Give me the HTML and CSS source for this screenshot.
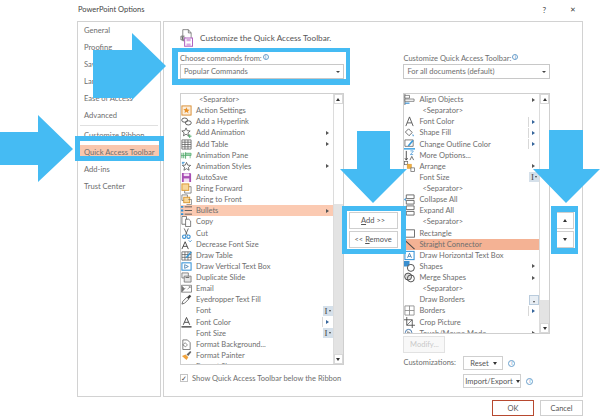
FILE: index.html
```html
<!DOCTYPE html>
<html lang="en">
<head>
<meta charset="utf-8">
<title>PowerPoint Options</title>
<link rel="stylesheet" href="styles.css">
</head>
<body>
<svg class="sprite" width="0" height="0" aria-hidden="true">
  <symbol id="i-action" viewBox="0 0 12 12"><rect x="1" y="1" width="10" height="10" fill="#fbeedd" stroke="#d98a2b"/><path d="M6 2.500l1 2.400 2.500.2-1.900 1.600.6 2.500L6 7.400 3.800 8.700l.6-2.500-1.900-1.600 2.500-.2z" fill="#e8912a"/></symbol>
  <symbol id="i-link" viewBox="0 0 12 12"><ellipse cx="4" cy="4.500" rx="3.200" ry="2.300" fill="none" stroke="#555"/><ellipse cx="8" cy="7.500" rx="3.200" ry="2.300" fill="none" stroke="#555"/></symbol>
  <symbol id="i-star" viewBox="0 0 12 12"><path d="M5.500 1l1.300 3 3.200.3-2.400 2.100.7 3.200-2.800-1.700-2.800 1.700.7-3.200L.9 4.300l3.300-.3z" fill="#fff" stroke="#444" stroke-width=".8"/><path d="M9.500 8v4M7.500 10h4" stroke="#4aa564"/></symbol>
  <symbol id="i-table" viewBox="0 0 12 12"><path d="M1 1h10v10H1zM1 3.500h10M1 6h10M1 8.500h10M4.300 1v10M7.600 1v10" fill="#fff" stroke="#555" stroke-width=".8"/></symbol>
  <symbol id="i-pane" viewBox="0 0 12 12"><path d="M1 3v6M3 3v6M5 2.500v7" stroke="#4aa564"/><path d="M5 3.500h6v2.500H5z" fill="#9bd3ad" stroke="#4aa564" stroke-width=".7"/><path d="M10 6v3M0 6h5" stroke="#4aa564" stroke-width=".7"/></symbol>
  <symbol id="i-anim" viewBox="0 0 12 12"><path d="M6 1.500l1.300 3 3.200.3-2.400 2.100.7 3.200L6 8.400l-2.800 1.700.7-3.200-2.400-2.100 3.200-.3z" fill="#fff" stroke="#444" stroke-width=".8"/><path d="M1 1.500h3M1 3h2" stroke="#3a8fd0"/></symbol>
  <symbol id="i-save" viewBox="0 0 12 12"><path d="M1 1h9l1 1v9H1z" fill="#a84fb4"/><path d="M3 1.500h6v3H3z" fill="#f3e0f5"/><path d="M3 7h6v4H3z" fill="#f3e0f5"/></symbol>
  <symbol id="i-forward" viewBox="0 0 12 12"><path d="M8 4h3v7H4V8" fill="none" stroke="#666" stroke-width=".8"/><rect x="1" y="1" width="7.500" height="7" fill="#f7d79a" stroke="#d9952c"/></symbol>
  <symbol id="i-front" viewBox="0 0 12 12"><path d="M1 1h6v6H1z" fill="none" stroke="#666" stroke-width=".8"/><rect x="3" y="3.500" width="6.500" height="6" fill="#f7d79a" stroke="#d9952c"/><path d="M8 6h3.500v5.500H6" fill="none" stroke="#666" stroke-width=".7"/></symbol>
  <symbol id="i-bullets" viewBox="0 0 12 12"><path d="M4 2h8M4 6h8M4 10h8" stroke="#555"/><path d="M0 1h2.500v2H0zM0 5h2.500v2H0zM0 9h2.500v2H0z" fill="#2f8fd6"/></symbol>
  <symbol id="i-copy" viewBox="0 0 12 12"><path d="M1 .5h5v8.500H1z" fill="#fff" stroke="#555" stroke-width=".8"/><path d="M5 3.500h3.500l2 2v6H5z" fill="#fff" stroke="#555" stroke-width=".8"/></symbol>
  <symbol id="i-cut" viewBox="0 0 12 12"><path d="M3.500.5l3.300 7M8 .5L5 7.500" stroke="#555" stroke-width=".9"/><circle cx="3.500" cy="9.500" r="1.800" fill="none" stroke="#3a8fd0" stroke-width="1.200"/><circle cx="8.200" cy="9.500" r="1.800" fill="none" stroke="#3a8fd0" stroke-width="1.200"/></symbol>
  <symbol id="i-decrease" viewBox="0 0 12 12"><path d="M1 11L4.500 3 8 11M2.300 8h4.400" fill="none" stroke="#444"/><path d="M8.500 1.500l1.500 1.500 1.500-1.500" fill="none" stroke="#3a8fd0"/></symbol>
  <symbol id="i-drawtable" viewBox="0 0 12 12"><path d="M1 2h10v9H1zM1 5h10M1 8h10M4.300 2v9M7.600 2v9" fill="#fff" stroke="#555" stroke-width=".8"/><path d="M5 8l5.500-6.500 1.300 1L6.300 9z" fill="#3a9ad9"/></symbol>
  <symbol id="i-vtext" viewBox="0 0 12 12"><rect x="1" y="2" width="10" height="8" fill="#fff" stroke="#2f8fd6" stroke-width="1.100"/><path d="M4 4l4 2-4 2z" fill="none" stroke="#2f6fa6" stroke-width=".8"/></symbol>
  <symbol id="i-dup" viewBox="0 0 12 12"><path d="M1 1h7v5.500H1z" fill="#eee" stroke="#666" stroke-width=".8"/><path d="M3.500 4.500H11V11H3.500z" fill="#e4e4e4" stroke="#666" stroke-width=".8"/><path d="M5 6h4" stroke="#666"/></symbol>
  <symbol id="i-email" viewBox="0 0 12 12"><path d="M.5 2.500h11v7.500H.5z" fill="#fff" stroke="#666" stroke-width=".8"/><path d="M1 3l3 3 2-1.500L1 10z" fill="#777"/><path d="M7 7l3-3M8.500 4H10v1.500" stroke="#666" fill="none" stroke-width=".7"/></symbol>
  <symbol id="i-drop" viewBox="0 0 12 12"><path d="M1 11l1-3 4.500-4.500 2 2L4 10z" fill="#fff" stroke="#444" stroke-width=".8"/><path d="M6.500 3.500L9.500 .8l1.700 1.700L8.500 5.500z" fill="#444"/></symbol>
  <symbol id="i-fontcolor" viewBox="0 0 12 12"><path d="M2.500 8.500L6 .5l3.500 8M3.800 5.800h4.400" fill="none" stroke="#444"/><path d="M.5 10h11v1.500H.5z" fill="#444"/></symbol>
  <symbol id="i-formatbg" viewBox="0 0 12 12"><path d="M2 1h5l3 3v7.500H2z" fill="#fff" stroke="#555" stroke-width=".8"/><path d="M4.500 4L7 6.500 5 8.500 2 6.500z" fill="#fff" stroke="#555" stroke-width=".7"/></symbol>
  <symbol id="i-painter" viewBox="0 0 12 12"><path d="M1 6.500l4-1.500 3 3-2 3z" fill="#f1a33c"/><path d="M6 5l4-4 1.300 1.300L8 6.500z" fill="#666"/></symbol>
  <symbol id="i-shape" viewBox="0 0 12 12"><path d="M1 9l4-5 3.500 4 3 3" fill="none" stroke="#3a6ea5"/></symbol>
  <symbol id="i-align" viewBox="0 0 12 12"><path d="M1 0v12" stroke="#666"/><path d="M1 1.500h5v3H1z" fill="#fff" stroke="#666" stroke-width=".8"/><path d="M1 5.500h10v2.500H1z" fill="#fff" stroke="#666" stroke-width=".8"/><path d="M1 10h5" stroke="#3a8fd0" stroke-width="1.300"/></symbol>
  <symbol id="i-a" viewBox="0 0 12 12"><path d="M2 11L6 1l4 10M3.500 7.500h5" fill="none" stroke="#555"/></symbol>
  <symbol id="i-fill" viewBox="0 0 12 12"><path d="M5 2L9 6 5.500 9.500 1.500 5.500z" fill="#fff" stroke="#555" stroke-width=".9"/><path d="M9.500 7.500c1 1 1.500 1.800 1 2.500-.8.400-1.500-.3-1-2.500z" fill="#3a8fd0"/></symbol>
  <symbol id="i-outline" viewBox="0 0 12 12"><path d="M1 1h9v7H1z" fill="#fff" stroke="#555" stroke-width=".8"/><path d="M4 7l5-6 1.500 1.200L5.500 8z" fill="#3a9ad9"/><path d="M0 10h12v1.500H0z" fill="#2f9be0"/></symbol>
  <symbol id="i-more" viewBox="0 0 12 12"><path d="M2.500 1v10M1 9l1.500 2L4 9" fill="none" stroke="#444"/><path d="M7 1h3v.6L7 5h3" fill="none" stroke="#3a8fd0" stroke-width=".8"/><path d="M6.500 11l2-4 2 4" fill="none" stroke="#444" stroke-width=".8"/></symbol>
  <symbol id="i-arrange" viewBox="0 0 12 12"><rect x=".5" y=".5" width="3.500" height="3.500" fill="#fff" stroke="#666" stroke-width=".8"/><rect x="3.500" y="3.500" width="4.500" height="4.500" fill="#f1b040" stroke="#d9952c" stroke-width=".6"/><rect x="7.500" y="7.500" width="4" height="4" fill="#fff" stroke="#666" stroke-width=".8"/></symbol>
  <symbol id="i-collapse" viewBox="0 0 12 12"><path d="M2.500 1H11v4H2.500zM2.500 7H11v4H2.500z" fill="#fff" stroke="#555" stroke-width=".9"/><path d="M0 6l2-2v4z" fill="#3a8fd0"/></symbol>
  <symbol id="i-rect" viewBox="0 0 12 12"><rect x=".5" y="2" width="11" height="8" fill="#fff" stroke="#555" stroke-width=".9"/></symbol>
  <symbol id="i-line" viewBox="0 0 12 12"><path d="M.5 1l11 10" stroke="#444" stroke-width="1.100"/></symbol>
  <symbol id="i-htext" viewBox="0 0 12 12"><rect x="1" y="1.500" width="10" height="9" fill="#fff" stroke="#2f8fd6" stroke-width="1.100"/><path d="M3.800 8.500L6 3.500l2.200 5M4.600 7h2.800" fill="none" stroke="#2f6fa6" stroke-width=".8"/></symbol>
  <symbol id="i-shapes" viewBox="0 0 12 12"><rect x="0" y="0" width="6" height="6" fill="#3a8fd0"/><circle cx="7.500" cy="7.500" r="3.800" fill="#fff" stroke="#444"/></symbol>
  <symbol id="i-merge" viewBox="0 0 12 12"><circle cx="4.500" cy="5" r="3.800" fill="#ddd" stroke="#444"/><circle cx="7.500" cy="7" r="3.800" fill="none" stroke="#444"/></symbol>
  <symbol id="i-borders" viewBox="0 0 12 12"><path d="M1 1h10v10H1zM6 1v10M1 6h10" fill="none" stroke="#888" stroke-width=".9"/></symbol>
  <symbol id="i-crop" viewBox="0 0 12 12"><path d="M3 0v9h9M0 3h9v9" fill="none" stroke="#444" stroke-width=".9"/><path d="M3 9l6-6" stroke="#444" stroke-width=".7"/></symbol>
  <symbol id="i-touch" viewBox="0 0 12 12"><circle cx="5" cy="5" r="3.500" fill="none" stroke="#3a6ea5"/><path d="M4 4v6l5 1V7z" fill="#fff" stroke="#444" stroke-width=".7"/></symbol>
  <symbol id="i-custom" viewBox="0 0 14 20"><path d="M3 1h6l3 3.500V13H3z" fill="#fff" stroke="#666" stroke-width=".8"/><path d="M9 1v3.500h3" fill="none" stroke="#666" stroke-width=".8"/><path d="M5 8H1v4h4M2.500 10H6M3.500 8.500 2 10l1.500 1.500" fill="none" stroke="#555" stroke-width=".8"/><path d="M5 10h8.500v9H5z" fill="#fff" stroke="#b061c0" stroke-width="1.100"/><path d="M7 10.500h4.500v3H7zM7 16h4.500v3H7z" fill="#d9a9e0"/></symbol>
</svg>

<header class="titlebar">
  <span class="title">PowerPoint Options</span>
  <span class="winbtns"><span class="help">?</span><span class="close">&#x2715;</span></span>
</header>

<main class="dialog">
  <nav class="sidebar">
    <div class="nav-item">General</div>
    <div class="nav-item">Proofing</div>
    <div class="nav-item">Save</div>
    <div class="nav-item">Language</div>
    <div class="nav-item">Ease of Access</div>
    <div class="nav-item">Advanced</div>
    <div class="nav-rule"></div>
    <div class="nav-item">Customize Ribbon</div>
    <div class="nav-item nav-active">Quick Access Toolbar</div>
    <div class="nav-item">Add-ins</div>
    <div class="nav-item">Trust Center</div>
  </nav>

  <section class="panel">
    <div class="heading">
      <svg class="heading-icon"><use href="#i-custom"/></svg>
      <span>Customize the Quick Access Toolbar.</span>
    </div>
    <div class="columns">
      <div class="col col-left">
        <div class="field-label">Choose commands from:<span class="info">i</span></div>
        <div class="select"><span>Popular Commands</span><span class="caret"></span></div>
        <div class="listbox listbox-left">
          <div class="rows">
            <div class="row sep">&lt;Separator&gt;</div>
            <div class="row"><svg class="ico"><use href="#i-action"/></svg>Action Settings</div>
            <div class="row"><svg class="ico"><use href="#i-link"/></svg>Add a Hyperlink</div>
            <div class="row"><svg class="ico"><use href="#i-star"/></svg>Add Animation<span class="sub"></span></div>
            <div class="row"><svg class="ico"><use href="#i-table"/></svg>Add Table<span class="sub"></span></div>
            <div class="row"><svg class="ico"><use href="#i-pane"/></svg>Animation Pane</div>
            <div class="row"><svg class="ico"><use href="#i-anim"/></svg>Animation Styles<span class="sub"></span></div>
            <div class="row"><svg class="ico"><use href="#i-save"/></svg>AutoSave</div>
            <div class="row"><svg class="ico"><use href="#i-forward"/></svg>Bring Forward</div>
            <div class="row"><svg class="ico"><use href="#i-front"/></svg>Bring to Front</div>
            <div class="row row-soft"><svg class="ico"><use href="#i-bullets"/></svg>Bullets<span class="sub"></span></div>
            <div class="row"><svg class="ico"><use href="#i-copy"/></svg>Copy</div>
            <div class="row"><svg class="ico"><use href="#i-cut"/></svg>Cut</div>
            <div class="row"><svg class="ico"><use href="#i-decrease"/></svg>Decrease Font Size</div>
            <div class="row"><svg class="ico"><use href="#i-drawtable"/></svg>Draw Table</div>
            <div class="row"><svg class="ico"><use href="#i-vtext"/></svg>Draw Vertical Text Box</div>
            <div class="row"><svg class="ico"><use href="#i-dup"/></svg>Duplicate Slide</div>
            <div class="row"><svg class="ico"><use href="#i-email"/></svg>Email</div>
            <div class="row"><svg class="ico"><use href="#i-drop"/></svg>Eyedropper Text Fill</div>
            <div class="row"><span class="ico"></span>Font<span class="combo">I<i class="combo-caret"></i></span></div>
            <div class="row"><svg class="ico"><use href="#i-fontcolor"/></svg>Font Color<span class="sub sub-split"></span></div>
            <div class="row"><span class="ico"></span>Font Size<span class="combo">I<i class="combo-caret"></i></span></div>
            <div class="row"><svg class="ico"><use href="#i-formatbg"/></svg>Format Background...</div>
            <div class="row"><svg class="ico"><use href="#i-painter"/></svg>Format Painter</div>
            <div class="row"><svg class="ico"><use href="#i-shape"/></svg>Format Shape</div>
          </div>
          <div class="scroll"><span class="sc-btn"><i class="up"></i></span><span class="thumb thumb-left"></span><span class="track"></span><span class="sc-btn"><i class="down"></i></span></div>
        </div>
        <label class="check"><span class="checkbox">&#x2713;</span>Show Quick Access Toolbar below the Ribbon</label>
      </div>

      <div class="col col-mid">
        <button class="btn btn-mid"><span><u>A</u>dd &gt;&gt;</span></button>
        <button class="btn btn-mid"><span>&lt;&lt; <u>R</u>emove</span></button>
      </div>

      <div class="col col-right">
        <div class="field-label">Customize Quick Access Toolbar:<span class="info">i</span></div>
        <div class="select"><span>For all documents (default)</span><span class="caret"></span></div>
        <div class="listbox listbox-right">
          <div class="rows">
            <div class="row"><svg class="ico"><use href="#i-align"/></svg>Align Objects<span class="sub"></span></div>
            <div class="row sep">&lt;Separator&gt;</div>
            <div class="row"><svg class="ico"><use href="#i-a"/></svg>Font Color<span class="sub sub-split"></span></div>
            <div class="row"><svg class="ico"><use href="#i-fill"/></svg>Shape Fill<span class="sub sub-split"></span></div>
            <div class="row"><svg class="ico"><use href="#i-outline"/></svg>Change Outline Color<span class="sub sub-split"></span></div>
            <div class="row"><svg class="ico"><use href="#i-more"/></svg>More Options...</div>
            <div class="row"><svg class="ico"><use href="#i-arrange"/></svg>Arrange<span class="sub"></span></div>
            <div class="row"><span class="ico"></span>Font Size<span class="combo">I<i class="combo-caret"></i></span></div>
            <div class="row sep">&lt;Separator&gt;</div>
            <div class="row"><svg class="ico"><use href="#i-collapse"/></svg>Collapse All</div>
            <div class="row"><svg class="ico"><use href="#i-collapse"/></svg>Expand All</div>
            <div class="row sep">&lt;Separator&gt;</div>
            <div class="row"><svg class="ico"><use href="#i-rect"/></svg>Rectangle</div>
            <div class="row row-strong"><svg class="ico"><use href="#i-line"/></svg>Straight Connector</div>
            <div class="row"><svg class="ico"><use href="#i-htext"/></svg>Draw Horizontal Text Box</div>
            <div class="row"><svg class="ico"><use href="#i-shapes"/></svg>Shapes<span class="sub"></span></div>
            <div class="row"><svg class="ico"><use href="#i-merge"/></svg>Merge Shapes<span class="sub"></span></div>
            <div class="row sep">&lt;Separator&gt;</div>
            <div class="row"><span class="ico"></span>Draw Borders<span class="combo combo-drop"><i class="combo-caret"></i></span></div>
            <div class="row"><svg class="ico"><use href="#i-borders"/></svg>Borders<span class="sub sub-split"></span></div>
            <div class="row"><svg class="ico"><use href="#i-crop"/></svg>Crop Picture</div>
            <div class="row"><svg class="ico"><use href="#i-touch"/></svg>Touch/Mouse Mode<span class="sub"></span></div>
          </div>
          <div class="scroll"><span class="sc-btn"><i class="up"></i></span><span class="thumb thumb-right"></span><span class="track"></span><span class="sc-btn"><i class="down"></i></span></div>
        </div>
        <button class="btn btn-modify" disabled>Modify...</button>
        <div class="custom-line">
          <span class="custom-label">Customizations:</span>
          <div class="custom-btns">
            <div class="custom-row"><button class="btn btn-reset">Reset<i class="btn-caret"></i></button><span class="info info-lg">i</span></div>
            <div class="custom-row"><button class="btn btn-import">Import/Export<i class="btn-caret"></i></button><span class="info info-lg">i</span></div>
          </div>
        </div>
      </div>

      <div class="col col-move">
        <button class="btn btn-move"><i class="up"></i></button>
        <button class="btn btn-move"><i class="down"></i></button>
      </div>
    </div>
  </section>
</main>

<footer class="footer">
  <button class="btn btn-ok">OK</button>
  <button class="btn btn-cancel">Cancel</button>
</footer>

<div class="frame frame-from"></div>
<div class="frame frame-quick"></div>
<div class="frame frame-add"></div>
<div class="frame frame-move"></div>
<svg class="arrows" viewBox="0 0 600 419" aria-hidden="true">
  <polygon points="93,50 132,50 132,33 166,66 132,100 132,98 93,98" class="arrow"/>
  <polygon points="0,132 38,132 38,115 73,149 38,182 38,165 0,165" class="arrow"/>
  <polygon points="357,131 390,131 390,169 407,169 373,203 340,169 357,169" class="arrow"/>
  <polygon points="549,130 583,130 583,169 600,169 566,203 533,169 549,169" class="arrow"/>
</svg>
</body>
</html>
```

FILE: styles.css
```css
* { box-sizing: border-box; }

html, body {
  margin: 0;
  padding: 0;
}

body {
  position: relative;
  width: 600px;
  height: 419px;
  overflow: hidden;
  background: #fff;
  color: #6e6e6e;
  font-family: Lato, "Open Sans", "Liberation Sans", sans-serif;
  font-size: 7.5px;
}

.sprite { position: absolute; }

.titlebar {
  height: 21px;
  padding: 0 24px 2px 78px;
  display: flex;
  align-items: center;
  justify-content: space-between;
}

.title { color: #444; font-size: 7.5px; }

.winbtns { display: flex; gap: 24px; align-items: center; color: #444; }
.help { font-size: 8px; }
.close { font-size: 7px; }

.dialog {
  display: flex;
  gap: 2px;
  height: 376px;
  padding-left: 77px;
}

.sidebar {
  width: 84px;
  border: 1px solid #d2d2d2;
}

.nav-item {
  height: 17px;
  line-height: 17px;
  padding-left: 6px;
  font-size: 7.600px;
  white-space: nowrap;
}

.nav-rule {
  height: 1px;
  background: #e0e0e0;
  margin: 1px 2px;
}

.nav-active {
  background: #f9c7ae;
  margin: 1px 1px 1px 2px;
  padding-left: 4px;
  height: 15px;
  line-height: 15px;
}

.panel {
  width: 420px;
  border: 1px solid #d2d2d2;
  padding: 0 0 0 16px;
}

.heading {
  height: 31px;
  display: flex;
  align-items: center;
  gap: 7px;
  color: #555;
  font-size: 8.200px;
  white-space: nowrap;
}

.heading-icon { width: 13px; height: 20px; flex: none; margin-top: 1px; }

.columns { display: flex; }

.col { display: flex; flex-direction: column; }
.col-left { width: 164px; }
.col-mid { width: 60px; padding: 159px 0 0 5px; gap: 2px; }
.col-right { width: 147px; }
.col-move { width: 32px; padding: 159px 0 0 6px; gap: 2px; }

.field-label {
  height: 11px;
  line-height: 11px;
  white-space: nowrap;
}

.info {
  display: inline-block;
  width: 6px;
  height: 6px;
  margin-left: 1px;
  border: 1px solid #6a9fcb;
  border-radius: 50%;
  color: #3a80bd;
  font-size: 5px;
  line-height: 4px;
  text-align: center;
  vertical-align: 2px;
}

.info-lg { width: 7px; height: 7px; margin-left: 5px; line-height: 5px; }

.select {
  height: 15px;
  width: 100%;
  display: flex;
  align-items: center;
  justify-content: space-between;
  padding: 0 2px 0 3px;
  border: 1px solid #c8c8c8;
}

.caret {
  width: 0;
  height: 0;
  border-left: 2px solid transparent;
  border-right: 2px solid transparent;
  border-top: 2.500px solid #444;
  margin-right: 1px;
}

.listbox {
  display: flex;
  margin-top: 14px;
  border: 1px solid #cfcfcf;
  overflow: hidden;
}

.listbox-left { height: 272px; }
.listbox-right { height: 241px; }

.rows { flex: 1; min-width: 0; }

.row {
  height: 11.130px;
  line-height: 11px;
  display: flex;
  align-items: center;
  white-space: nowrap;
}

.row.sep { padding-left: 18px; }

.row-soft { background: #fbcab2; }
.row-strong { background: #f4b294; }

.ico {
  width: 11px;
  height: 11px;
  flex: none;
  margin: 0 4px 0 0;
  overflow: visible;
}

.sub {
  margin-left: auto;
  margin-right: 4px;
  width: 0;
  height: 0;
  border-top: 2.500px solid transparent;
  border-bottom: 2.500px solid transparent;
  border-left: 3px solid #555;
}

.sub-split {
  position: relative;
  border-left-color: #35659b;
}

.sub-split::before {
  content: "";
  position: absolute;
  left: -7px;
  top: -5px;
  width: 1px;
  height: 10px;
  background: #d8d8d8;
}

.combo {
  margin-left: auto;
  width: 10px;
  height: 10px;
  display: flex;
  align-items: center;
  justify-content: center;
  gap: 1px;
  background: #d5e0ea;
  color: #444;
  font-family: "Liberation Serif", serif;
  font-size: 9px;
  line-height: 10px;
}

.combo-caret {
  width: 0;
  height: 0;
  border-left: 1.500px solid transparent;
  border-right: 1.500px solid transparent;
  border-top: 2px solid #444;
}

.combo-drop {
  background: #e8eef4;
  border: 1px solid #b9cbdc;
  align-items: flex-end;
  padding-bottom: 1px;
}

.scroll {
  width: 10px;
  flex: none;
  display: flex;
  flex-direction: column;
  border-left: 1px solid #dcdcdc;
}

.sc-btn {
  height: 10px;
  flex: none;
  display: flex;
  align-items: center;
  justify-content: center;
  background: #fff;
  border: 1px solid #d8d8d8;
}

.thumb { background: #fff; flex: none; }
.thumb-left { height: 100px; }
.thumb-right { height: 196px; }
.track { flex: 1; background: #e3e3e3; }

.up {
  display: block;
  width: 0;
  height: 0;
  border-left: 2.500px solid transparent;
  border-right: 2.500px solid transparent;
  border-bottom: 3px solid #333;
}

.down {
  display: block;
  width: 0;
  height: 0;
  border-left: 2.500px solid transparent;
  border-right: 2.500px solid transparent;
  border-top: 3px solid #333;
}

.check {
  display: flex;
  align-items: center;
  gap: 4px;
  margin-top: 8px;
  height: 10px;
  white-space: nowrap;
}

.checkbox {
  width: 8px;
  height: 8px;
  flex: none;
  border: 1px solid #c4c4c4;
  font-size: 7px;
  line-height: 6px;
  text-align: center;
  color: #444;
}

.btn {
  display: flex;
  align-items: center;
  justify-content: center;
  padding: 0;
  margin: 0;
  background: #fff;
  border: 1px solid #cfcfcf;
  color: #555;
  font: inherit;
  white-space: nowrap;
}

.btn-mid { width: 49px; height: 17px; }

.btn-move { width: 18px; height: 17px; }

.btn-modify {
  width: 42px;
  height: 17px;
  margin-top: 2px;
  background: #f8f8f8;
  border-color: #e2e2e2;
  color: #c8c8c8;
}

.custom-line {
  display: flex;
  margin-top: 3px;
  gap: 7px;
}

.custom-label { width: 53px; line-height: 14px; white-space: nowrap; }

.custom-btns { display: flex; flex-direction: column; gap: 4px; }
.custom-row { display: flex; align-items: center; }

.btn-reset { width: 40px; height: 14px; gap: 4px; }
.btn-import { width: 58px; height: 14px; gap: 3px; }

.btn-caret {
  width: 0;
  height: 0;
  border-left: 2.500px solid transparent;
  border-right: 2.500px solid transparent;
  border-top: 3px solid #333;
}

.footer {
  display: flex;
  justify-content: flex-end;
  gap: 6px;
  padding: 3px 17px 0 0;
}

.btn-ok { width: 42px; height: 16px; border: 1px solid #b7492f; }
.btn-cancel { width: 43px; height: 16px; }

.frame {
  position: absolute;
  border: 5px solid #45bbf3;
  pointer-events: none;
}

.frame-from { left: 172px; top: 48px; width: 178px; height: 37px; border-width: 4px 4px 6px 6px; }
.frame-quick { left: 75px; top: 136px; width: 89px; height: 25px; }
.frame-add { left: 342px; top: 206px; width: 64px; height: 48px; }
.frame-move { left: 551px; top: 206px; width: 27px; height: 48px; border-width: 6px 3px 6px 6px; }

.arrows {
  position: absolute;
  left: 0;
  top: 0;
  width: 600px;
  height: 419px;
  pointer-events: none;
}

.arrow { fill: #45bbf3; }
```
